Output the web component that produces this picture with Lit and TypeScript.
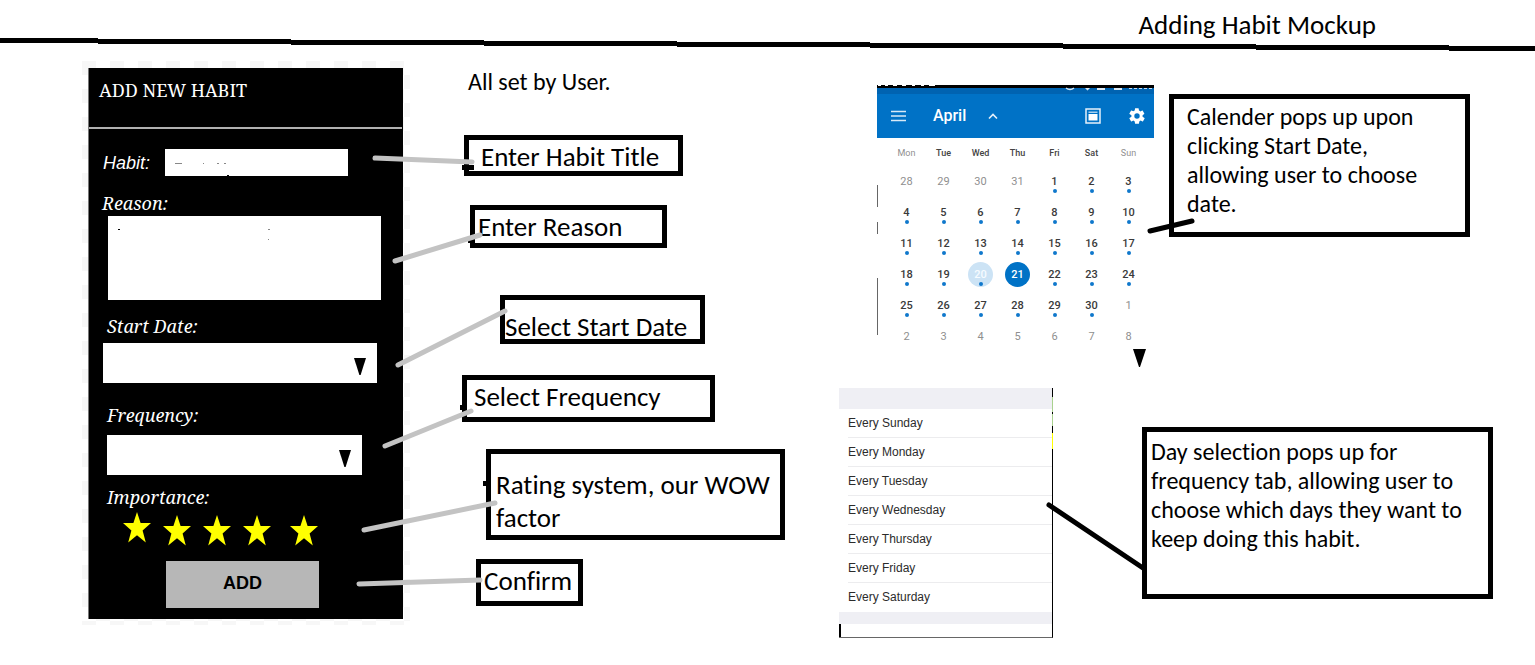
import { LitElement, html, css, svg } from "lit";
import { customElement, state } from "lit/decorators.js";
import { classMap } from "lit/directives/class-map.js";
import { styleMap } from "lit/directives/style-map.js";

/** The black phone form: habit name, reason, date, frequency, rating. */
@customElement("habit-form")
class HabitForm extends LitElement {
  @state() rating = 5;

  static styles = css`
    :host { display: block; }
    .checker {
      width: 318px;
      padding: 7px 4px 6px 6px;
      background: conic-gradient(transparent 25%, #f7f7f7 0 50%, transparent 0 75%, #f7f7f7 0) 0 0 / 28px 28px;
    }
    .phone {
      box-sizing: border-box;
      width: 315px;
      padding-bottom: 11px;
      background: #000;
      color: #fff;
      border-left: 1px solid #777;
      font: italic 18px/24px "Noto Serif", "DejaVu Serif Condensed", "DejaVu Serif", serif;
    }
    .title {
      margin: 0 1px 0 0;
      padding: 10px 10px 25px;
      font: 18px/24px "Noto Serif", "DejaVu Serif Condensed", "DejaVu Serif", serif;
      border-bottom: 2px solid #b0b0b0;
    }
    .row { display: flex; align-items: center; gap: 15px; padding: 20px 0 14px 14px; }
    .row label { font: italic 18px/24px "Liberation Sans", Arial, sans-serif; }
    .field { display: block; box-sizing: border-box; margin: 0; padding: 4px 8px; border: 0; border-radius: 0; background: #fff; color: #000; outline: 0; font: 14px/18px "Liberation Sans", sans-serif; }
    .habit { width: 183px; height: 27px; }
    .reason-label { display: block; padding: 1px 0 1px 13px; }
    .reason { width: 273px; height: 84px; margin-left: 19px; resize: none; }
    .start { padding: 14px 0 20px 14px; }
    .start label, .freq label { display: block; }
    .start label { padding: 0 0 5px 4px; }
    .freq { padding: 0 0 11px 18px; }
    .freq label { padding-bottom: 8px; }
    .select { position: relative; display: flex; }
    .select select { appearance: none; width: 100%; height: 40px; }
    .wide { width: 274px; }
    .narrow { width: 255px; }
    .select svg { position: absolute; right: 11px; top: 15px; pointer-events: none; }
    .rating { margin: 0; padding: 0 0 0 18px; border: 0; }
    .rating legend { padding: 0; line-height: 22px; }
    .stars { display: grid; grid-template-columns: 40px 40px 40px 47px 28px; padding: 4px 0 15px 16px; }
    .star { width: 28px; height: 34px; padding: 0; border: 0; background: none; cursor: pointer; }
    .star svg { display: block; fill: #555; }
    .star.on svg { fill: #ff0; }
    .add {
      display: block;
      width: 153px;
      height: 47px;
      margin-left: 77px;
      padding: 0 0 4px;
      border: 0;
      background: #b7b7b7;
      color: #000;
      font: bold 18px/24px "Liberation Sans", Arial, sans-serif;
    }
  `;

  private arrow() {
    return html`<svg width="12" height="17" viewBox="0 0 12 17" aria-hidden="true"><path d="M0 0H12L6.6 17H5.4Z" /></svg>`;
  }

  render() {
    return html`
      <div class="checker">
        <form class="phone" @submit=${(e: Event) => e.preventDefault()}>
          <h2 class="title">ADD NEW HABIT</h2>
          <div class="row">
            <label for="habit">Habit:</label>
            <input class="field habit" id="habit" type="text" />
          </div>
          <label class="reason-label" for="reason">Reason:</label>
          <textarea class="field reason" id="reason"></textarea>
          <div class="start">
            <label for="start">Start Date:</label>
            <div class="select wide"><select class="field" id="start"><option></option></select>${this.arrow()}</div>
          </div>
          <div class="freq">
            <label for="freq">Frequency:</label>
            <div class="select narrow"><select class="field" id="freq"><option></option></select>${this.arrow()}</div>
          </div>
          <fieldset class="rating">
            <legend>Importance:</legend>
            <div class="stars">
              ${[1, 2, 3, 4, 5].map(
                (n) => html`<button
                  type="button"
                  class=${classMap({ star: true, on: n <= this.rating })}
                  aria-label="${n} of 5"
                  @click=${() => (this.rating = n)}
                >
                  <svg width="28" height="34" viewBox=${n === 1 ? "0 0 28 34" : "0 -3 28 34"}>
                    <path d="M14 0L17.6 11H28L19.6 18.4L22.8 30.4L14 23.2L5.2 30.4L8.4 18.4L0 11H10.4Z" />
                  </svg>
                </button>`
              )}
            </div>
          </fieldset>
          <button class="add" type="submit">ADD</button>
        </form>
      </div>
    `;
  }
}

/** Month view that pops up for the start date. */
@customElement("month-calendar")
class MonthCalendar extends LitElement {
  static styles = css`
    :host { display: block; font-family: Roboto, sans-serif; }
    .cal { width: 277px; background: #fff; }
    .status { display: block; background: #0063b1; }
    .bar { display: flex; align-items: center; height: 44px; padding: 0 8px 0 13px; background: #0072c6; color: #fff; }
    .bar button { display: flex; padding: 0; border: 0; background: none; color: inherit; }
    .month { margin: 0 0 0 27px; font-size: 16px; font-weight: 500; line-height: 20px; }
    .caret { margin-left: 21px; }
    .spacer { flex: 1; }
    .gear { margin-left: 27px; }
    .grid { width: 259px; margin-left: 11px; border-collapse: collapse; table-layout: fixed; }
    .grid th { height: 28px; padding: 2px 0 0; font-size: 9px; font-weight: 500; line-height: 12px; color: #444; box-sizing: border-box; }
    .grid td { height: 31px; padding: 0; text-align: center; vertical-align: middle; font-size: 11px; font-weight: 500; line-height: 14px; color: #3a3a3a; }
    .grid .soft { color: #8f8f8f; font-weight: 400; }
    .day { position: relative; display: flex; align-items: center; justify-content: center; width: 25px; height: 25px; margin: 0 auto; border-radius: 50%; }
    .dot::after { content: ""; position: absolute; left: 11px; bottom: 1px; width: 4px; height: 4px; border-radius: 50%; background: #0f78cc; }
    .prev { background: #cce3f5; color: #f6fbff; }
    .today { background: #0072c6; color: #fff; }
  `;

  private cell(i: number) {
    const n = i < 4 ? 28 + i : i < 34 ? i - 3 : i - 33;
    const inMonth = i >= 4 && i < 34;
    return html`<td class=${inMonth ? "" : "soft"}>
      <span class=${classMap({ day: true, dot: inMonth && n !== 21, prev: inMonth && n === 20, today: inMonth && n === 21 })}>${n}</span>
    </td>`;
  }

  render() {
    const names = ["Mon", "Tue", "Wed", "Thu", "Fri", "Sat", "Sun"];
    return html`
      <div class="cal">
        <svg class="status" width="277" height="9" viewBox="0 0 277 9" aria-hidden="true">
          <path d="M0 0H277V3H0Z" />
          <path d="M1 0H4M8 0H11M16 0H20M25 0H29M35 0H38M44 0H47M52 0H58" stroke="#fff" stroke-width="2" />
          <path d="M189 3q4 3 8 0" fill="none" stroke="#dbe9f5" stroke-width="1.5" />
          <path d="M208 3h5l-2.500 2.500zM220 3h8v2h-8zM237 3h8v2h-8z" fill="#dbe9f5" />
          <path d="M252 3.500H276" stroke="#c6dbee" stroke-dasharray="3 2" />
        </svg>
        <div class="bar">
          <button aria-label="Menu">
            <svg width="16" height="12" viewBox="0 0 16 12" stroke="#d9eaf7" stroke-width="1.600"><path d="M1 1.500H16M1 6H16M1 10.500H16" /></svg>
          </button>
          <h3 class="month">April</h3>
          <button class="caret" aria-label="Collapse month">
            <svg width="12" height="8" viewBox="0 0 12 8" fill="none" stroke="#e6f1fa" stroke-width="1.600"><path d="M2 6.500L6 2.500L10 6.500" /></svg>
          </button>
          <span class="spacer"></span>
          <button aria-label="Agenda">
            <svg width="16" height="16" viewBox="0 0 16 16">
              <rect x="1" y="1" width="14" height="14" fill="none" stroke="#e6f1fa" stroke-width="1.500" />
              <path d="M3.500 3.500H12.500V5H3.500Z" fill="#a9d0ee" />
              <path d="M3.500 6H12.500V12.500H3.500Z" fill="#fff" />
            </svg>
          </button>
          <button class="gear" aria-label="Settings">
            <svg width="18" height="18" viewBox="0 0 24 24" fill="#fff">
              <path d="M19.400 13c.040-.300.060-.650.060-1s-.020-.700-.060-1l2.200-1.700c.200-.150.250-.450.120-.680l-2.100-3.600c-.130-.220-.400-.300-.640-.220l-2.600 1.050c-.540-.420-1.120-.760-1.760-1.020l-.400-2.760A.520.520 0 0 0 13.700 1.600H9.900c-.260 0-.480.190-.520.440l-.400 2.760c-.640.260-1.220.610-1.760 1.020l-2.600-1.050c-.240-.090-.510 0-.640.220l-2.100 3.600c-.130.230-.080.530.120.680L4.600 11c-.040.300-.070.660-.070 1s.030.700.070 1l-2.600 1.700c-.200.150-.250.450-.120.680l2.100 3.600c.130.220.400.300.640.220l2.600-1.050c.540.420 1.120.760 1.760 1.020l.400 2.760c.040.250.260.440.520.440h4.200c.260 0 .480-.190.520-.440l.400-2.760c.640-.260 1.220-.610 1.760-1.020l2.600 1.050c.240.090.510 0 .640-.220l2.100-3.600c.130-.230.080-.530-.120-.680ZM12 15.600a3.600 3.600 0 1 1 0-7.200 3.600 3.600 0 0 1 0 7.200Z" />
            </svg>
          </button>
        </div>
        <table class="grid">
          <thead>
            <tr>${names.map((d, i) => html`<th scope="col" class=${i === 0 || i === 6 ? "soft" : ""}>${d}</th>`)}</tr>
          </thead>
          <tbody>
            ${[0, 1, 2, 3, 4, 5].map((r) => html`<tr>${names.map((_, c) => this.cell(r * 7 + c))}</tr>`)}
          </tbody>
        </table>
      </div>
    `;
  }
}

/** Weekday list that pops up for the frequency. */
@customElement("day-list")
class DayList extends LitElement {
  static styles = css`
    :host { display: block; }
    .list { box-sizing: border-box; width: 214px; margin: 0; padding: 0; list-style: none; border-right: 1px solid #000; border-bottom: 1px solid #666; }
    .band { height: 21px; background: #efeff4; }
    .band.low { height: 12px; }
    .foot { height: 13px; border-left: 2px solid #000; }
    .item { padding-left: 9px; }
    .item button {
      display: block;
      box-sizing: border-box;
      width: 100%;
      height: 29px;
      padding: 0;
      border: 0;
      border-bottom: 1px solid #ececee;
      background: none;
      color: #2b2b2b;
      text-align: left;
      font: 12px/28px "Liberation Sans", Arial, sans-serif;
    }
    .item.last button { border-bottom-color: transparent; }
  `;

  render() {
    const days = ["Sunday", "Monday", "Tuesday", "Wednesday", "Thursday", "Friday", "Saturday"];
    return html`
      <ul class="list">
        <li class="band" role="presentation"></li>
        ${days.map((d, i) => html`<li class=${classMap({ item: true, last: i === 6 })}><button type="button">Every ${d}</button></li>`)}
        <li class="band low" role="presentation"></li>
        <li class="foot" role="presentation"></li>
      </ul>
    `;
  }
}

interface Note {
  text: string;
  x: number;
  y: number;
  w: number;
  h: number;
  padX: number;
  padY: number;
  small?: boolean;
}

const NOTES: Note[] = [
  { text: "Enter Habit Title", x: 464, y: 135, w: 219, h: 41, padX: 12, padY: 0 },
  { text: "Enter Reason", x: 470, y: 205, w: 197, h: 43, padX: 3, padY: 0 },
  { text: "Select Start Date", x: 500, y: 295, w: 205, h: 49, padX: 0, padY: 10 },
  { text: "Select Frequency", x: 462, y: 375, w: 253, h: 47, padX: 7, padY: 0 },
  { text: "Rating system, our WOW factor", x: 486, y: 449, w: 299, h: 91, padX: 5, padY: 14 },
  { text: "Confirm", x: 476, y: 559, w: 107, h: 47, padX: 3, padY: 0 },
  { text: "Calender pops up upon clicking Start Date, allowing user to choose date.", x: 1169, y: 94, w: 301, h: 143, padX: 13, padY: 3, small: true },
  { text: "Day selection pops up for frequency tab, allowing user to choose which days they want to keep doing this habit.", x: 1142, y: 427, w: 351, h: 172, padX: 4, padY: 5, small: true },
];

const GREY_LINES = [
  [375, 158, 472, 162],
  [395, 261, 480, 235],
  [398, 365, 505, 311],
  [385, 446, 471, 411],
  [364, 530, 495, 503],
  [359, 584, 480, 580],
];
const BLACK_LINES = [
  [1150, 231, 1192, 221],
  [1049, 505, 1143, 568],
];

@customElement("app-root")
class AppRoot extends LitElement {
  static styles = css`
    :host { display: block; }
    .page { position: relative; min-height: 100vh; background: #fff; color: #000; overflow: hidden; font: 24px/29px Carlito, Lato, sans-serif; font-variant-ligatures: none; }
    .head { display: flex; justify-content: flex-end; padding: 8px 159px 0 0; }
    .name { margin: 0; font-size: 27px; font-weight: 400; line-height: 33px; }
    .rule { display: block; width: 100%; height: 14px; margin-top: -4px; }
    .board { display: grid; grid-template-columns: 334px 371px 1fr; padding: 10px 0 0 82px; }
    .lead { margin: 6px 0 0; padding-left: 52px; }
    .popups { display: flex; flex-direction: column; align-items: flex-start; padding: 24px 0 0 52px; }
    .shift { padding-left: 38px; }
    .down { display: block; margin: -3px 0 21px 294px; }
    .note { position: absolute; box-sizing: border-box; margin: 0; border: 5px solid #000; font-size: 27px; line-height: 33px; }
    .note.small { font-size: 24px; line-height: 29px; }
    .ink { position: absolute; left: 0; top: 0; width: 1535px; height: 665px; pointer-events: none; }
  `;

  render() {
    return html`
      <main class="page">
        <header class="head"><h1 class="name">Adding Habit Mockup</h1></header>
        <svg class="rule" viewBox="0 0 1535 14" preserveAspectRatio="none" aria-hidden="true">
          <path
            d="M0 3.500H98M98 4.500H291M291 5.500H484M484 6.500H677M677 7.500H870M870 8.500H1063M1063 9.500H1256M1256 10.500H1449M1449 11.500H1535"
            fill="none"
            stroke="#000"
            stroke-width="5"
          />
        </svg>
        <div class="board">
          <habit-form></habit-form>
          <p class="lead">All set by User.</p>
          <div class="popups">
            <month-calendar class="shift"></month-calendar>
            <svg class="down" width="13" height="18" viewBox="0 0 13 18" aria-hidden="true"><path d="M0 0H13L7 18H6Z" /></svg>
            <day-list></day-list>
          </div>
        </div>
        ${NOTES.map(
          (n) => html`<p
            class=${classMap({ note: true, small: !!n.small })}
            style=${styleMap({ left: `${n.x}px`, top: `${n.y}px`, width: `${n.w}px`, height: `${n.h}px`, padding: `${n.padY}px ${n.padX}px 0` })}
          >${n.text}</p>`
        )}
        <svg class="ink" viewBox="0 0 1535 665" aria-hidden="true">
          <path d="M462 165H474V170H462ZM468 240H473V243H468ZM460 405H465V410H460ZM483 481H487V486H483Z" />
          <path d="M175 163H182V164H175ZM203 163H204V164H203ZM217 163H219V164H217ZM224 163H226V164H224ZM268 229H270V230H268ZM268 239H269V240H268Z" fill="#888" />
          <path d="M227 175H229V177H227ZM118 229H120V230H118Z" />
          <path d="M877 185H878V207H877ZM877 222H878V234H877ZM877 278H878V335H877Z" fill="#666" />
          <path d="M1052 397H1053V412H1052ZM1052 414H1053V426H1052Z" fill="#a9d18e" />
          <path d="M1052 433H1053V449H1052Z" fill="#ff0" />
          ${GREY_LINES.map(([a, b, c, d]) => svg`<line x1=${a} y1=${b} x2=${c} y2=${d} stroke="#c3c3c3" stroke-width="5" stroke-linecap="round" />`)}
          ${BLACK_LINES.map(([a, b, c, d]) => svg`<line x1=${a} y1=${b} x2=${c} y2=${d} stroke="#000" stroke-width="5" stroke-linecap="round" />`)}
        </svg>
      </main>
    `;
  }
}
